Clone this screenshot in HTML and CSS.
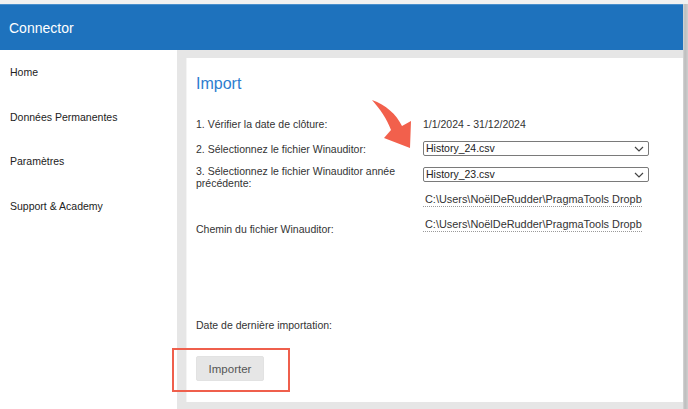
FILE: index.html
```html
<!DOCTYPE html>
<html lang="fr">
<head>
<meta charset="utf-8">
<title>Connector</title>
<link rel="stylesheet" href="styles.css">
</head>
<body>
<div class="frame">
  <div class="app">
    <header class="topbar">Connector</header>
    <div class="body">
      <nav class="sidebar">
        <a class="nav-item">Home</a>
        <a class="nav-item">Données Permanentes</a>
        <a class="nav-item">Paramètres</a>
        <a class="nav-item">Support &amp; Academy</a>
      </nav>
      <main class="main">
        <section class="card">
          <h1 class="title">Import</h1>
          <div class="row row-1">
            <div class="label">1. Vérifier la date de clôture:</div>
            <div class="value">1/1/2024 - 31/12/2024</div>
          </div>
          <div class="row row-2">
            <div class="label">2. Sélectionnez le fichier Winauditor:</div>
            <div class="select"><span>History_24.csv</span><svg class="chev" viewBox="0 0 10 6" width="10" height="6"><path d="M1 1 L5 5 L9 1" fill="none" stroke="#444" stroke-width="1.2"/></svg></div>
          </div>
          <div class="row row-3">
            <div class="label">3. Sélectionnez le fichier Winauditor année précédente:</div>
            <div class="select"><span>History_23.csv</span><svg class="chev" viewBox="0 0 10 6" width="10" height="6"><path d="M1 1 L5 5 L9 1" fill="none" stroke="#444" stroke-width="1.2"/></svg></div>
          </div>
          <div class="row row-4">
            <div class="label"></div>
            <div class="path">C:\Users\NoëlDeRudder\PragmaTools Dropbox</div>
          </div>
          <div class="row row-5">
            <div class="label">Chemin du fichier Winauditor:</div>
            <div class="path">C:\Users\NoëlDeRudder\PragmaTools Dropbox</div>
          </div>
          <div class="last-import">Date de dernière importation:</div>
          <button class="btn">Importer</button>
        </section>
      </main>
    </div>
  </div>
  <div class="edge"></div>
</div>
<div class="highlight"></div>
<svg class="arrow" width="60" height="60" viewBox="360 95 60 60">
  <path d="M372 100 C380 109 387 119 391 130 L384 138 L410 148 L411 121 L402 126 C396 114 386 105 372 100 Z" fill="#f2604c"/>
</svg>
</body>
</html>
```

FILE: styles.css
```css
html, body {
  margin: 0;
  padding: 0;
}
body {
  width: 688px;
  height: 409px;
  overflow: hidden;
  background: #f1f1f1;
  font-family: "Liberation Sans", Arial, sans-serif;
  color: #333;
  position: relative;
}
.frame {
  display: flex;
  height: 409px;
  padding-top: 4px;
  box-sizing: border-box;
}
.app {
  flex: 1;
  display: flex;
  flex-direction: column;
  min-width: 0;
}
.edge {
  width: 5px;
  background: linear-gradient(to right, #d6d6d6, #bdbdbd 40%, #cfcfcf);
}
.topbar {
  height: 46px;
  background: #1e72bd;
  color: #fff;
  font-size: 14px;
  line-height: 46px;
  padding-left: 9px;
  border-top: 1px solid #4a8fcc;
  box-sizing: border-box;
}
.body {
  flex: 1;
  display: flex;
  min-height: 0;
}
.sidebar {
  width: 177px;
  background: #fff;
  display: flex;
  flex-direction: column;
  padding-top: 16px;
  box-sizing: border-box;
}
.nav-item {
  font-size: 10.5px;
  line-height: 12px;
  height: 44.5px;
  padding-left: 10px;
  color: #222;
}
.main {
  flex: 1;
  background: #e6e6e6;
  padding: 8px 0 7px 9px;
}
.card {
  background: #fff;
  height: 344px;
  padding: 16px 10px 0 9px;
  box-sizing: border-box;
  border-left: 1px solid #f4f4f4;
}
.title {
  margin: 0;
  font-size: 16px;
  font-weight: normal;
  line-height: 20px;
  color: #2d7dcf;
}
.row {
  display: flex;
  font-size: 10.5px;
}
.label {
  width: 227px;
  flex: none;
  line-height: 12px;
}
.row-1 {
  margin-top: 21px;
  height: 18px;
  align-items: center;
}
.row-2 {
  margin-top: 7px;
  height: 17px;
  align-items: center;
}
.row-3 {
  margin-top: 8px;
  height: 26px;
  align-items: flex-start;
}
.row-3 .label {
  width: 220px;
  margin-right: 7px;
}
.row-3 .select {
  margin-top: 2px;
}
.row-4 {
  margin-top: 1px;
  height: 15px;
}
.row-5 {
  margin-top: 10px;
  height: 18px;
}
.row-5 .label {
  margin-top: 6px;
}
.select {
  width: 226px;
  height: 15px;
  box-sizing: border-box;
  border: 1px solid #7a7a7a;
  border-radius: 2px;
  display: flex;
  align-items: center;
  justify-content: space-between;
  padding: 0 3px 0 2px;
  line-height: 13px;
  color: #222;
}
.chev {
  display: block;
  margin-right: 1px;
}
.path {
  width: 219px;
  height: 15px;
  box-sizing: border-box;
  border-bottom: 1px dotted #9a9a9a;
  font-size: 10.9px;
  line-height: 14px;
  white-space: nowrap;
  overflow: hidden;
  padding-left: 2px;
  color: #333;
}
.last-import {
  margin-top: 84px;
  font-size: 10.5px;
  line-height: 12px;
}
.btn {
  display: block;
  margin-top: 25px;
  width: 68px;
  height: 25px;
  border: 1px solid #e2e2e2;
  border-radius: 2px;
  background: #e6e6e6;
  color: #555;
  font-family: "Liberation Sans", Arial, sans-serif;
  font-size: 11.5px;
  padding: 0;
}
.highlight {
  position: absolute;
  left: 172px;
  top: 348px;
  width: 118px;
  height: 44px;
  border: 2px solid #ef5f4c;
  box-sizing: border-box;
}
.arrow {
  position: absolute;
  left: 360px;
  top: 95px;
}
```
